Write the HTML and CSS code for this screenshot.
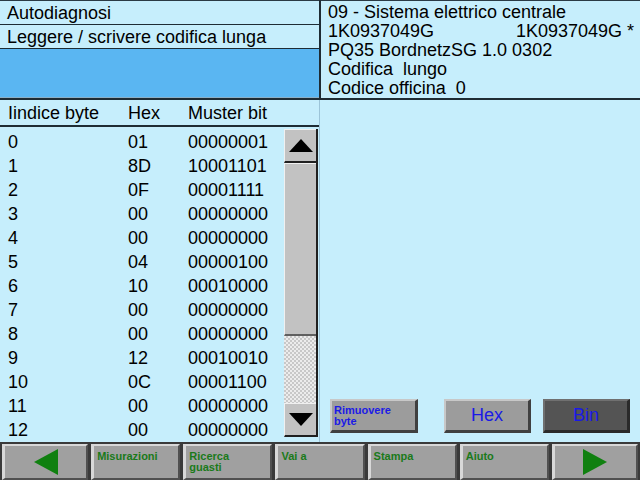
FILE: index.html
```html
<!DOCTYPE html>
<html>
<head>
<meta charset="utf-8">
<link rel="stylesheet" href="styles.css">
</head>
<body>
<div class="screen">
  <div class="top">
    <div class="top-left">
      <div class="row-title">Autodiagnosi</div>
      <div class="row-title">Leggere / scrivere codifica lunga</div>
      <div class="blue-fill"></div>
    </div>
    <div class="top-right">
      <div>09 - Sistema elettrico centrale</div>
      <div class="pair"><span>1K0937049G</span><span>1K0937049G *</span></div>
      <div>PQ35 BordnetzSG 1.0 0302</div>
      <div>Codifica&nbsp; lungo</div>
      <div>Codice officina&nbsp; 0</div>
    </div>
  </div>
  <div class="main">
    <div class="table-panel">
      <div class="thead">
        <span class="c1">Iindice byte</span><span class="c2">Hex</span><span class="c3">Muster bit</span>
      </div>
      <div class="tbody">
        <div class="rows">
          <div class="tr"><span class="c1">0</span><span class="c2">01</span><span class="c3">00000001</span></div>
          <div class="tr"><span class="c1">1</span><span class="c2">8D</span><span class="c3">10001101</span></div>
          <div class="tr"><span class="c1">2</span><span class="c2">0F</span><span class="c3">00001111</span></div>
          <div class="tr"><span class="c1">3</span><span class="c2">00</span><span class="c3">00000000</span></div>
          <div class="tr"><span class="c1">4</span><span class="c2">00</span><span class="c3">00000000</span></div>
          <div class="tr"><span class="c1">5</span><span class="c2">04</span><span class="c3">00000100</span></div>
          <div class="tr"><span class="c1">6</span><span class="c2">10</span><span class="c3">00010000</span></div>
          <div class="tr"><span class="c1">7</span><span class="c2">00</span><span class="c3">00000000</span></div>
          <div class="tr"><span class="c1">8</span><span class="c2">00</span><span class="c3">00000000</span></div>
          <div class="tr"><span class="c1">9</span><span class="c2">12</span><span class="c3">00010010</span></div>
          <div class="tr"><span class="c1">10</span><span class="c2">0C</span><span class="c3">00001100</span></div>
          <div class="tr"><span class="c1">11</span><span class="c2">00</span><span class="c3">00000000</span></div>
          <div class="tr"><span class="c1">12</span><span class="c2">00</span><span class="c3">00000000</span></div>
        </div>
        <div class="scrollbar">
          <div class="sb-btn"><svg width="24" height="13" viewBox="0 0 24 13"><polygon points="12,0 24,13 0,13" fill="#000"/></svg></div>
          <div class="sb-thumb"></div>
          <div class="sb-track"></div>
          <div class="sb-btn"><svg width="24" height="13" viewBox="0 0 24 13"><polygon points="0,0 24,0 12,13" fill="#000"/></svg></div>
        </div>
      </div>
    </div>
    <div class="side-panel">
      <div class="actions">
        <div class="act small">Rimuovere<br>byte</div>
        <div class="act big">Hex</div>
        <div class="act big dark">Bin</div>
      </div>
    </div>
  </div>
  <div class="bottombar">
    <div class="nav"><svg width="24" height="26" viewBox="0 0 24 26"><polygon points="24,0 24,26 0,13" fill="#108010"/></svg></div>
    <div class="nav label">Misurazioni</div>
    <div class="nav label">Ricerca<br>guasti</div>
    <div class="nav label">Vai a</div>
    <div class="nav label">Stampa</div>
    <div class="nav label">Aiuto</div>
    <div class="nav"><svg width="24" height="26" viewBox="0 0 24 26"><polygon points="0,0 24,13 0,26" fill="#108010"/></svg></div>
  </div>
</div>
</body>
</html>
```

FILE: styles.css
```css
* { box-sizing: border-box; }
html, body { margin: 0; padding: 0; }
body {
  width: 640px;
  height: 480px;
  overflow: hidden;
  background: #2c3a40;
  font-family: "Liberation Sans", Arial, sans-serif;
  font-size: 18px;
  color: #000;
}
.screen {
  width: 640px;
  height: 480px;
  display: flex;
  flex-direction: column;
}
.top {
  height: 101px;
  display: grid;
  grid-template-columns: 319px 1fr;
  column-gap: 2px;
  padding-bottom: 2px;
  background: #1e2c34;
}
.top-left {
  display: flex;
  flex-direction: column;
  background: #c6eefc;
  border-top: 1px solid #2a3a44;
}
.row-title {
  height: 24px;
  line-height: 24px;
  padding-left: 7px;
  border-bottom: 1px solid #1e2c34;
  background: #c6eefc;
}
.blue-fill {
  flex: 1;
  background: #5ab6f2;
  border-bottom: 1px solid #8ab0c8;
}
.top-right {
  background: #c6eefc;
  padding: 2px 6px 0 7px;
  line-height: 19px;
  border-top: 1px solid #2a3a44;
}
.pair {
  display: flex;
  justify-content: space-between;
}
.main {
  flex: 1;
  display: grid;
  grid-template-columns: 319px 1fr;
  column-gap: 1px;
  background: #9cc4d8;
}
.table-panel {
  display: flex;
  flex-direction: column;
  background: #c6eefc;
}
.thead {
  height: 27px;
  display: flex;
  align-items: center;
  padding-top: 1px;
  border-bottom: 2px solid #1e2c34;
}
.c1 { width: 128px; padding-left: 8px; }
.c2 { width: 60px; }
.c3 { width: 96px; }
.tbody {
  flex: 1;
  display: flex;
  padding-top: 1px;
}
.rows {
  width: 284px;
  padding-top: 2px;
}
.tr {
  height: 24px;
  display: flex;
  align-items: center;
}
.scrollbar {
  width: 34px;
  height: 308px;
  display: flex;
  flex-direction: column;
  margin-top: 1px;
  border-right: 2px solid #202020;
}
.sb-btn {
  height: 34px;
  background: #c2c2c2;
  border-top: 1px solid #f0f0f0;
  border-left: 1px solid #f0f0f0;
  border-bottom: 2px solid #202020;
  display: flex;
  align-items: center;
  justify-content: center;
}
.sb-thumb {
  height: 173px;
  background: #c2c2c2;
  border-top: 1px solid #f0f0f0;
  border-left: 1px solid #f0f0f0;
  border-bottom: 2px solid #606060;
}
.sb-track {
  flex: 1;
  background: repeating-conic-gradient(#c8c8c8 0 25%, #ececec 0 50%) 0 0 / 4px 4px;
}
.side-panel {
  background: #c6eefc;
  display: flex;
  flex-direction: column;
  justify-content: flex-end;
  padding: 0 12px 9px 10px;
}
.actions {
  display: flex;
  justify-content: space-between;
  align-items: flex-end;
}
.act {
  height: 34px;
  background: #9c9c9c;
  color: #1a1ae6;
  border-top: 2px solid #c8c8c8;
  border-left: 2px solid #c8c8c8;
  border-bottom: 3px solid #404040;
  border-right: 3px solid #404040;
}
.act.small {
  width: 88px;
  font-size: 11px;
  font-weight: bold;
  line-height: 11px;
  padding: 4px 0 0 2px;
}
.act.big {
  width: 87px;
  font-size: 18px;
  display: flex;
  align-items: center;
  justify-content: center;
  margin-left: 26px;
}
.act.dark {
  background: #545454;
  margin-left: 12px;
  border-top-color: #707070;
  border-left-color: #707070;
  border-bottom-color: #2a2a2a;
  border-right-color: #2a2a2a;
}
.bottombar {
  height: 38px;
  display: flex;
  gap: 3px;
  padding: 2px 2px 0 2px;
  background: #3a3a3a;
}
.nav {
  flex: 1;
  background: #a0a0a0;
  border-top: 2px solid #d8d8d8;
  border-left: 3px solid #d8d8d8;
  border-right: 2px solid #505050;
  border-bottom: 2px solid #505050;
  display: flex;
  align-items: center;
  justify-content: center;
}
.nav.label {
  display: block;
  color: #1a7a1a;
  font-size: 11px;
  font-weight: bold;
  line-height: 11px;
  padding: 5px 0 0 3px;
}
```
